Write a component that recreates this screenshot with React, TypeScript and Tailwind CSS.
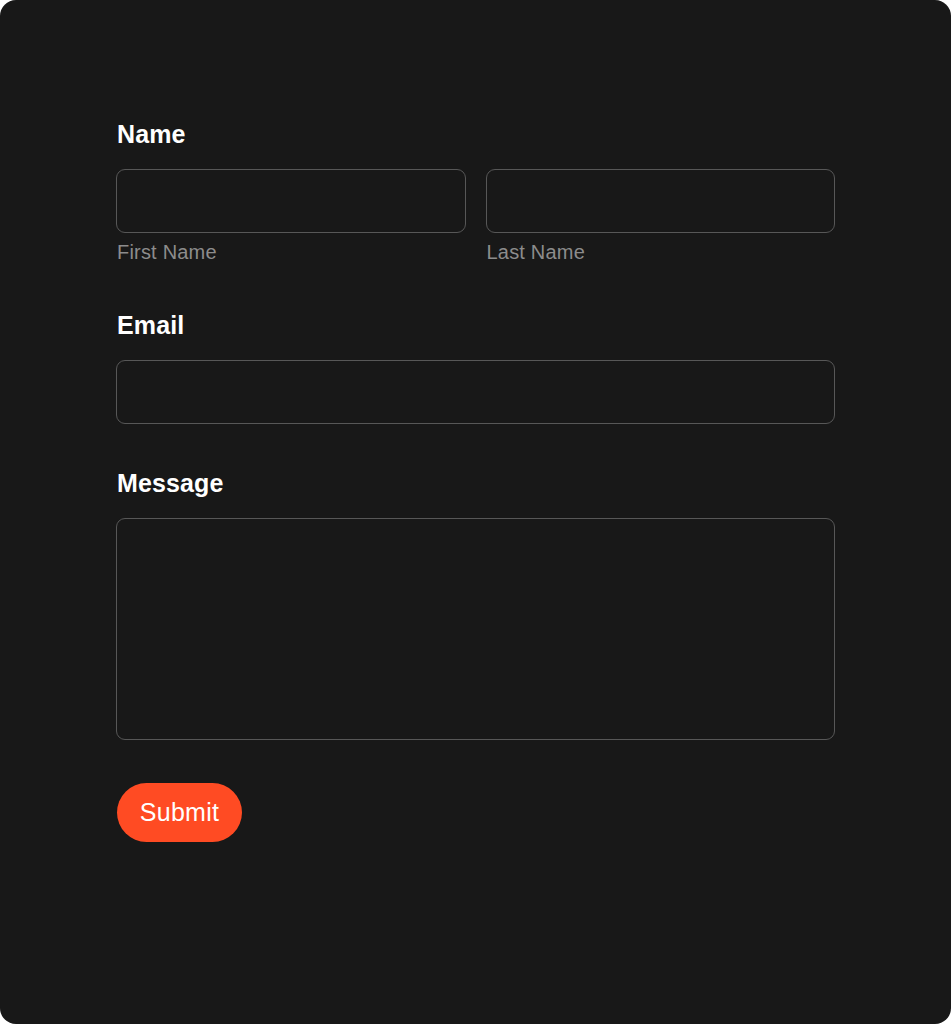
import { useState, type FormEvent } from 'react';

const font = { fontFamily: '"Liberation Sans", Arial, Helvetica, sans-serif' };

function FieldLabel({ htmlFor, children }: { htmlFor: string; children: string }) {
  return (
    <label
      htmlFor={htmlFor}
      className="block pl-px text-[25px] leading-8 font-bold tracking-[0.005em] text-white mb-[19px]"
    >
      {children}
    </label>
  );
}

const inputClass =
  'w-full h-16 rounded-[9px] bg-transparent px-4 text-[20px] text-white outline-none border-[1.5px] border-[#575757] focus:border-[#8a8a8a]';

export default function App() {
  const [first, setFirst] = useState('');
  const [last, setLast] = useState('');
  const [email, setEmail] = useState('');
  const [message, setMessage] = useState('');

  function handleSubmit(e: FormEvent) {
    e.preventDefault();
  }

  return (
    <div className="w-[951px] h-[1024px] bg-white" style={font}>
      <div className="h-full w-full rounded-2xl bg-[#181818] px-[116px] pt-[118px]">
        <form onSubmit={handleSubmit} className="flex flex-col gap-[43px]">
          {/* Name */}
          <div>
            <FieldLabel htmlFor="first-name">Name</FieldLabel>
            <div className="grid grid-cols-2 gap-5">
              <div>
                <input
                  id="first-name"
                  type="text"
                  value={first}
                  onChange={(e) => setFirst(e.target.value)}
                  className={inputClass}
                />
                <p className="mt-[5px] pl-px text-[20px] leading-7 tracking-[0.01em] text-[#8c8c8c]">First Name</p>
              </div>
              <div>
                <input
                  id="last-name"
                  type="text"
                  value={last}
                  onChange={(e) => setLast(e.target.value)}
                  className={inputClass}
                />
                <p className="mt-[5px] pl-px text-[20px] leading-7 tracking-[0.01em] text-[#8c8c8c]">Last Name</p>
              </div>
            </div>
          </div>

          {/* Email */}
          <div>
            <FieldLabel htmlFor="email">Email</FieldLabel>
            <input
              id="email"
              type="email"
              value={email}
              onChange={(e) => setEmail(e.target.value)}
              className={inputClass}
            />
          </div>

          {/* Message */}
          <div>
            <FieldLabel htmlFor="message">Message</FieldLabel>
            <textarea
              id="message"
              value={message}
              onChange={(e) => setMessage(e.target.value)}
              className="block w-full h-[222px] resize-none rounded-[9px] bg-transparent p-4 text-[20px] text-white outline-none border-[1.5px] border-[#575757] focus:border-[#8a8a8a]"
            />
          </div>

          <div>
            <button
              type="submit"
              className="ml-px h-[59px] w-[125px] rounded-full bg-[#ff4b23] text-[25px] tracking-[0.01em] text-white hover:opacity-90"
            >
              Submit
            </button>
          </div>
        </form>
      </div>
    </div>
  );
}
